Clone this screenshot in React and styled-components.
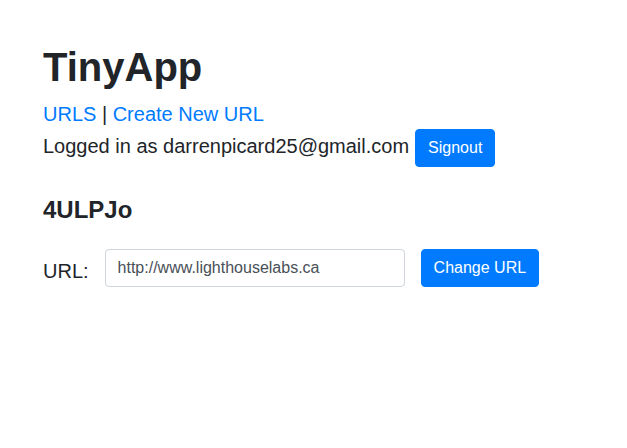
import React from "react";
import styled, { createGlobalStyle } from "styled-components";

const GlobalStyle = createGlobalStyle`
  html, body {
    margin: 0;
    padding: 0;
    background: #fff;
  }
  body {
    font-family: "Liberation Sans", Arial, sans-serif;
    font-size: 16px;
    line-height: 1.5;
    color: #212529;
  }
  * {
    box-sizing: border-box;
  }
`;

function App() {
  return (
    <>
      <GlobalStyle />
      <Page>
        <Header>
          <Title>TinyApp</Title>
          <Nav>
            <NavLink href="#">URLS</NavLink> | <NavLink href="#">Create New URL</NavLink>
          </Nav>
          <Login>
            Logged in as darrenpicard25@gmail.com
            <Button type="button" $left="6px">Signout</Button>
          </Login>
        </Header>
        <Main>
          <ShortId>4ULPJo</ShortId>
          <Form onSubmit={(e) => e.preventDefault()}>
            <Label htmlFor="longURL">URL:</Label>
            <Input id="longURL" type="text" defaultValue="http://www.lighthouselabs.ca" />
            <Button type="submit">Change URL</Button>
          </Form>
        </Main>
      </Page>
    </>
  );
}

// style-component

const Page = styled.div`
  padding: 43px 43px 0;
`;
const Header = styled.header`
  font-size: 20px;
  line-height: 30px;
`;
const Title = styled.h1`
  margin: 0 0 8px;
  font-size: 40px;
  line-height: 48px;
  font-weight: 700;
`;
const Nav = styled.div`
  white-space: nowrap;
`;
const NavLink = styled.a`
  color: #007bff;
  text-decoration: none;
`;
const Login = styled.div`
  white-space: nowrap;
`;
const Button = styled.button`
  display: inline-block;
  margin-left: ${(p) => p.$left || "0"};
  padding: 6px 12px;
  border: 1px solid #007bff;
  border-radius: 4px;
  background-color: #007bff;
  color: #fff;
  font-family: inherit;
  font-size: 16px;
  line-height: 24px;
  cursor: pointer;
  vertical-align: baseline;
`;
const Main = styled.main`
  margin-top: 29px;
`;
const ShortId = styled.h4`
  margin: 0 0 8px;
  font-size: 24px;
  line-height: 28.8px;
  font-weight: 700;
`;
const Form = styled.form`
  display: flex;
  align-items: flex-start;
  gap: 16px;
  padding-top: 16px;
`;
const Label = styled.label`
  padding-top: 7px;
  font-size: 20px;
  line-height: 30px;
`;
const Input = styled.input`
  width: 300px;
  height: 38px;
  padding: 6px 12px;
  border: 1px solid #ced4da;
  border-radius: 4px;
  font-family: inherit;
  font-size: 16px;
  line-height: 24px;
  color: #495057;
  outline: none;
`;

export default App;
